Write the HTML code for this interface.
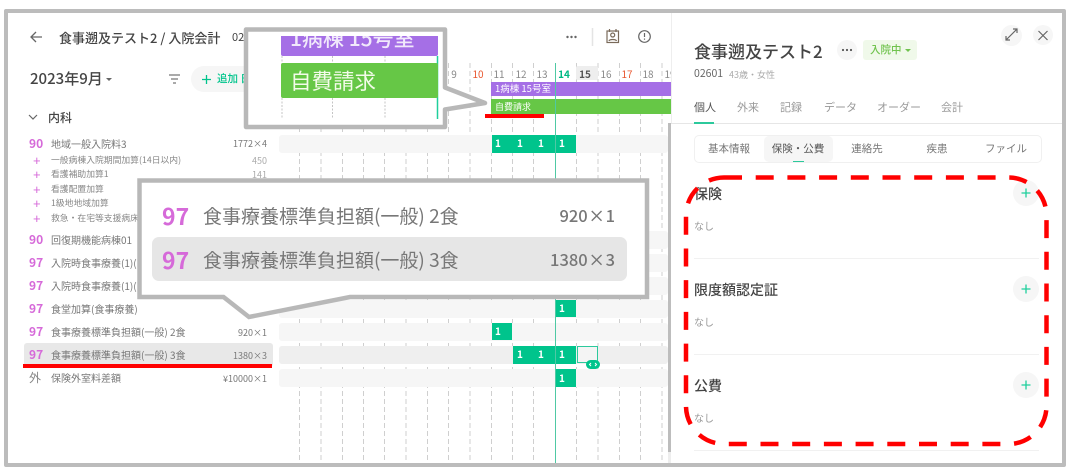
<!DOCTYPE html>
<html lang="ja"><head><meta charset="utf-8">
<style>
html,body{margin:0;padding:0;background:#fff}
#p{position:relative;width:1072px;height:473px;overflow:hidden;background:#fff;font-family:"Liberation Sans","Noto Sans CJK JP",sans-serif;color:#666}
#p div{position:absolute}
.t{white-space:nowrap;line-height:1}
.r{text-align:right}
.c{text-align:center}
.m{font-family:"Noto Sans CJK JP",sans-serif}
.code{font-family:"Noto Sans CJK JP",sans-serif;color:#d66ad9;font-size:12px;font-weight:700;left:29px}
.lb{font-family:"Noto Sans CJK JP",sans-serif;left:51px;font-size:10px;color:#777}
.sb{font-family:"Noto Sans CJK JP",sans-serif;left:51px;font-size:8.800px;color:#888}
.pl{left:33px;font-size:13px;color:#d66ad9}
.val{right:805px;font-size:9px;color:#777;font-family:"Noto Sans CJK JP",sans-serif;word-spacing:-2px}
.row{left:279px;width:389px;height:18px;background:#f6f6f6;border-radius:3px}
.blk{background:#00c48c}
.one{color:#fff;font-size:10px;font-weight:700;font-family:"Noto Sans CJK JP",sans-serif}
.d{font-size:10px;color:#888;top:69px;width:22px;text-align:center;font-family:"Noto Sans CJK JP",sans-serif}
.tab{font-size:11px;color:#999;top:102px;font-family:"Noto Sans CJK JP",sans-serif}
.st{font-size:10.500px;color:#777;top:144px;text-align:center;width:70px;font-family:"Noto Sans CJK JP",sans-serif}
.h{left:694px;font-size:14px;font-weight:500;color:#444;font-family:"Noto Sans CJK JP",sans-serif}
.no{left:694px;font-size:10px;color:#999;font-family:"Noto Sans CJK JP",sans-serif}
.cir{background:#f6f6f6;border-radius:50%}
.ln{left:694px;width:345px;height:1px;background:#f1f1f1}
svg{position:absolute;left:0;top:0}
</style></head><body><div id="p">

<svg width="1072" height="473">
<g stroke="#cfcfcf" stroke-width="1" stroke-dasharray="5 3" fill="none">
<path d="M299.500 63V463M321 63V463M342.500 63V463M363.500 63V463M384.500 63V463M406 63V463M427.500 63V463M448.500 63V463M470 63V463M491.500 63V463M512.500 63V463M533.500 63V463M576.500 63V463M598 63V463M619.500 63V463M640.500 63V463M662 63V463"/>
</g>
</svg>

<div class="row" style="top:135px"></div>
<div class="row" style="top:231px"></div>
<div class="row" style="top:254px"></div>
<div class="row" style="top:277px"></div>
<div class="row" style="top:300px"></div>
<div class="row" style="top:323px"></div>
<div class="row" style="top:346px;background:#efefef"></div>
<div class="row" style="top:369px"></div>

<!-- header -->
<svg width="60" height="60"><path d="M42 37H31M36 32l-5 5 5 5" fill="none" stroke="#666" stroke-width="1.300"/></svg>
<div class="t m" style="left:59px;top:31px;font-size:13px;font-weight:500;color:#444">食事遡及テスト2 / 入院会計</div>
<div class="t m" style="left:232px;top:32px;font-size:11px;color:#444">02</div>
<div class="t m" style="left:30px;top:71px;font-size:15px;font-weight:500;color:#444">2023年9月</div>
<svg width="120" height="90"><path d="M106 78h6l-3 3z" fill="#666"/></svg>
<svg width="190" height="90"><path d="M169 75h11M171 79h7M173 83h3" stroke="#777" stroke-width="1.300" fill="none"/></svg>
<div style="left:191px;top:66px;width:70px;height:26px;background:#f6f6f6;border-radius:13px"></div>
<svg width="220" height="90"><path d="M206.500 75v9M202 79.500h9" stroke="#00c48c" stroke-width="1.300" fill="none"/></svg>
<div class="t m" style="left:217px;top:74px;font-size:10.500px;color:#00c48c;font-weight:500">追加 日</div>
<svg width="60" height="130"><path d="M29 115l4 4 4-4" fill="none" stroke="#666" stroke-width="1.200"/></svg>
<div class="t m" style="left:48px;top:112px;font-size:12px;font-weight:500;color:#444">内科</div>

<!-- top right of main -->
<svg width="670" height="60">
<g fill="#666"><circle cx="567.500" cy="37" r="1.200"/><circle cx="571.500" cy="37" r="1.200"/><circle cx="575.500" cy="37" r="1.200"/></g>
<path d="M592.500 28V46" stroke="#e4e4e4" stroke-width="1.500"/>
<g fill="none" stroke="#7a6a5a" stroke-width="1.200"><rect x="607" y="31" width="11.500" height="11.500"/><path d="M609.500 29v3M616 29v3"/><circle cx="612.700" cy="35" r="2"/><path d="M609 41c.5-2 7-2 7.500 0"/></g>
<g fill="none" stroke="#666" stroke-width="1.200"><circle cx="644.500" cy="36.500" r="5.800"/><path d="M644.500 33v4M644.500 38.500v1.200"/></g>
</svg>

<!-- left list -->
<div class="t code" style="top:138px">90</div><div class="t lb" style="top:139px">地域一般入院料3</div><div class="t val" style="top:139px">1772 × 4</div>
<div class="t pl" style="top:154px">+</div><div class="t sb" style="top:156px">一般病棟入院期間加算(14日以内)</div><div class="t val" style="top:156px;color:#aaa">450</div>
<div class="t pl" style="top:168px">+</div><div class="t sb" style="top:170px">看護補助加算1</div><div class="t val" style="top:170px;color:#aaa">141</div>
<div class="t pl" style="top:183px">+</div><div class="t sb" style="top:185px">看護配置加算</div>
<div class="t pl" style="top:197px">+</div><div class="t sb" style="top:199px">1級地地域加算</div>
<div class="t pl" style="top:212px">+</div><div class="t sb" style="top:214px">救急・在宅等支援病床</div>
<div class="t code" style="top:234px">90</div><div class="t lb" style="top:235px">回復期機能病棟01</div>
<div class="t code" style="top:257px">97</div><div class="t lb" style="top:258px">入院時食事療養(1)(</div>
<div class="t code" style="top:280px">97</div><div class="t lb" style="top:281px">入院時食事療養(1)(</div>
<div class="t code" style="top:303px">97</div><div class="t lb" style="top:304px">食堂加算(食事療養)</div>
<div class="t code" style="top:326px">97</div><div class="t lb" style="top:327px">食事療養標準負担額(一般) 2食</div><div class="t val" style="top:328px">920 × 1</div>
<div style="left:24px;top:343px;width:249px;height:24px;background:#e8e8e8;border-radius:3px"></div>
<div class="t code" style="top:349px">97</div><div class="t lb" style="top:350px">食事療養標準負担額(一般) 3食</div><div class="t val" style="top:351px">1380 × 3</div>
<div style="left:23px;top:364px;width:249px;height:4px;background:#f00"></div>
<div class="t code" style="top:372px;color:#888;font-weight:400">外</div><div class="t lb" style="top:373px">保険外室料差額</div><div class="t val" style="top:374px">¥10000 × 1</div>

<!-- days -->
<div class="t d" style="left:443px">9</div>
<div class="t d" style="left:467px;color:#e8562e">10</div>
<div class="t d" style="left:488px">11</div>
<div class="t d" style="left:510px">12</div>
<div class="t d" style="left:531px">13</div>
<div style="left:576px;top:66px;width:22px;height:14px;background:#eee;border-radius:2px"></div>
<div class="t d" style="left:553px;color:#00b884;font-weight:700">14</div>
<div class="t d" style="left:574px;color:#555;font-weight:700">15</div>
<div class="t d" style="left:595px">16</div>
<div class="t d" style="left:616px;color:#e8562e">17</div>
<div class="t d" style="left:637px">18</div>
<div class="t d" style="left:659px">19</div>

<div style="left:491px;top:82px;width:180px;height:14px;background:#a56fe6"></div>
<div class="t m" style="left:495px;top:84px;font-size:9.500px;color:#fff">1病棟 15号室</div>
<div style="left:491px;top:99px;width:180px;height:15px;background:#66c746"></div>
<div class="t m" style="left:495px;top:102px;font-size:9px;color:#fff">自費請求</div>
<div style="left:485px;top:114px;width:59px;height:4px;background:#f00"></div>

<!-- blocks -->
<div class="blk" style="left:492px;top:135px;width:84px;height:18px"></div>
<div class="blk" style="left:555px;top:300px;width:21px;height:17px"></div>
<div class="blk" style="left:492px;top:323px;width:20px;height:17px"></div>
<div class="blk" style="left:513px;top:346px;width:63px;height:18px"></div>
<div class="blk" style="left:555px;top:369px;width:21px;height:18px"></div>
<div style="left:555px;top:63px;width:1px;height:400px;background:#4fc9a4"></div>
<div class="t one" style="left:495px;top:138px">1</div><div class="t one" style="left:517px;top:138px">1</div><div class="t one" style="left:538px;top:138px">1</div><div class="t one" style="left:559px;top:138px">1</div>
<div class="t one" style="left:559px;top:303px">1</div>
<div class="t one" style="left:495px;top:326px">1</div>
<div class="t one" style="left:517px;top:349px">1</div><div class="t one" style="left:538px;top:349px">1</div><div class="t one" style="left:559px;top:349px">1</div>
<div class="t one" style="left:559px;top:373px">1</div>
<div style="left:577px;top:346px;width:19px;height:15px;border:1px solid #2cc99c;background:#f4f4f4"></div>
<div style="left:586px;top:360px;width:14px;height:9px;background:#00c48c;border-radius:5px"></div>
<svg width="610" height="375"><path d="M591 363l-1.500 1.500 1.500 1.500M595 363l1.500 1.500-1.500 1.500" stroke="#fff" fill="none" stroke-width="1"/></svg>

<!-- frame + right panel -->
<div style="left:671px;top:13px;width:391px;height:450px;background:#fff"></div>
<div style="left:668px;top:123px;width:3px;height:329px;background:#bdbdbd"></div>
<div style="left:668px;top:452px;width:3px;height:11px;background:#eee"></div>
<div style="left:671px;top:13px;width:1px;height:110px;background:#eee"></div>
<div style="left:671px;top:123px;width:391px;height:1px;background:#e6e6e6"></div>

<div class="t m" style="left:694px;top:42px;font-size:17px;font-weight:500;color:#444">食事遡及テスト2</div>
<div class="cir" style="left:837px;top:40px;width:20px;height:20px"></div>
<svg width="870" height="60"><g fill="#555"><circle cx="843" cy="50" r="1.100"/><circle cx="847" cy="50" r="1.100"/><circle cx="851" cy="50" r="1.100"/></g></svg>
<div style="left:863px;top:40px;width:54px;height:20px;background:#f0f9ea;border-radius:3px"></div>
<div class="t m" style="left:870px;top:45px;font-size:10.500px;font-weight:500;color:#70c34e">入院中</div>
<svg width="920" height="60"><path d="M905 49h6l-3 3z" fill="#70c34e"/></svg>
<div class="t m" style="left:694px;top:69px;font-size:10.500px;color:#666">02601</div>
<div class="t m" style="left:729px;top:70px;font-size:9px;color:#aaa">43歳・女性</div>
<div class="cir" style="left:1001px;top:25px;width:21px;height:21px"></div>
<div class="cir" style="left:1033px;top:25px;width:20px;height:20px"></div>
<svg width="1072" height="50"><path d="M1006 40l11-11M1006 36v4h4M1017 33v-4h-4M1038.500 31l9 9M1047.500 31l-9 9" stroke="#666" stroke-width="1.200" fill="none"/></svg>

<div class="t tab" style="left:694px;color:#555">個人</div>
<div class="t tab" style="left:737px">外来</div>
<div class="t tab" style="left:780px">記録</div>
<div class="t tab" style="left:824px">データ</div>
<div class="t tab" style="left:877px">オーダー</div>
<div class="t tab" style="left:941px">会計</div>
<div style="left:694px;top:122px;width:20px;height:2px;background:#2cc99c"></div>

<div style="left:694px;top:135px;width:346px;height:26px;border:1px solid #f0f0f0;border-radius:5px"></div>
<div style="left:764px;top:136px;width:69px;height:26px;background:#f6f6f6;border-radius:5px"></div>
<div style="left:793px;top:161px;width:11px;height:1px;background:#2cc99c"></div>
<div class="t st" style="left:694px">基本情報</div>
<div class="t st" style="left:763px;color:#555">保険・公費</div>
<div class="t st" style="left:832px">連絡先</div>
<div class="t st" style="left:902px">疾患</div>
<div class="t st" style="left:971px">ファイル</div>

<div class="t h" style="top:187px">保険</div><div class="t no" style="top:221px">なし</div>
<div class="ln" style="top:258px"></div>
<div class="t h" style="top:283px;font-size:14px">限度額認定証</div><div class="t no" style="top:317px">なし</div>
<div class="ln" style="top:354px"></div>
<div class="t h" style="top:379px">公費</div><div class="t no" style="top:413px">なし</div>
<div class="ln" style="top:450px"></div>
<div class="cir" style="left:1013px;top:180px;width:26px;height:26px"></div>
<div class="cir" style="left:1013px;top:276px;width:26px;height:26px"></div>
<div class="cir" style="left:1013px;top:372px;width:26px;height:26px"></div>
<svg width="1072" height="473">
<path d="M1026 188.500v9M1021.500 193h9M1026 284.500v9M1021.500 289h9M1026 380.500v9M1021.500 385h9" stroke="#1fcf9c" stroke-width="1.300" fill="none"/>
<rect x="686" y="177.500" width="360.500" height="266.500" rx="38" ry="38" fill="none" stroke="#f00" stroke-width="4.500" stroke-dasharray="18 13.700"/>
</svg>

<!-- outer frame -->
<div style="left:4px;top:9px;width:1054px;height:450px;border:4px solid #bcbcbc;border-radius:2px"></div>

<!-- callout 1 -->
<svg width="1072" height="473">
<path d="M246 29.500H445V87.500L485 103L445 109.500V127H246Z" fill="#fff" stroke="#b8b8b8" stroke-width="4.500" stroke-linejoin="round"/>
<g stroke="#c4c4c4" stroke-width="1" stroke-dasharray="2 1.500"><path d="M282 56V118M332.500 56V118M385 56V118"/></g>
<path d="M437.500 56V119" stroke="#1fcf9c" stroke-width="1.500"/>
</svg>
<div style="left:281px;top:36px;width:157px;height:20px;background:#a56fe6;overflow:hidden;border-radius:0 0 2px 2px"><div class="t m" style="left:9px;top:-8px;font-size:21px;color:#f1e9fb;font-weight:500">1病棟 15号室</div></div>
<div style="left:281px;top:63px;width:157px;height:35px;background:#66c746;border-radius:2px"></div>
<div class="t m" style="left:290px;top:70px;font-size:21.500px;color:#f3fbe9">自費請求</div>

<!-- callout 2 -->
<svg width="1072" height="473">
<path d="M139.500 180.500H647V297H350L249 317L223.500 297H139.500Z" fill="#fff" stroke="#b8b8b8" stroke-width="4.500" stroke-linejoin="miter"/>
</svg>
<div style="left:152px;top:237px;width:475px;height:44px;background:#e6e6e6;border-radius:7px"></div>
<div class="t m" style="left:162px;top:204px;font-size:23px;font-weight:700;color:#d66ad9">97</div>
<div class="t m" style="left:203px;top:206px;font-size:19px;color:#777">食事療養標準負担額(一般) 2食</div>
<div class="t m r" style="right:457px;top:207px;font-size:16.500px;font-weight:500;color:#777;word-spacing:-3px">920 × 1</div>
<div class="t m" style="left:162px;top:248px;font-size:23px;font-weight:700;color:#d66ad9">97</div>
<div class="t m" style="left:203px;top:250px;font-size:19px;color:#777">食事療養標準負担額(一般) 3食</div>
<div class="t m r" style="right:457px;top:251px;font-size:16.500px;font-weight:500;color:#777;word-spacing:-3px">1380 × 3</div>

</div></body></html>
